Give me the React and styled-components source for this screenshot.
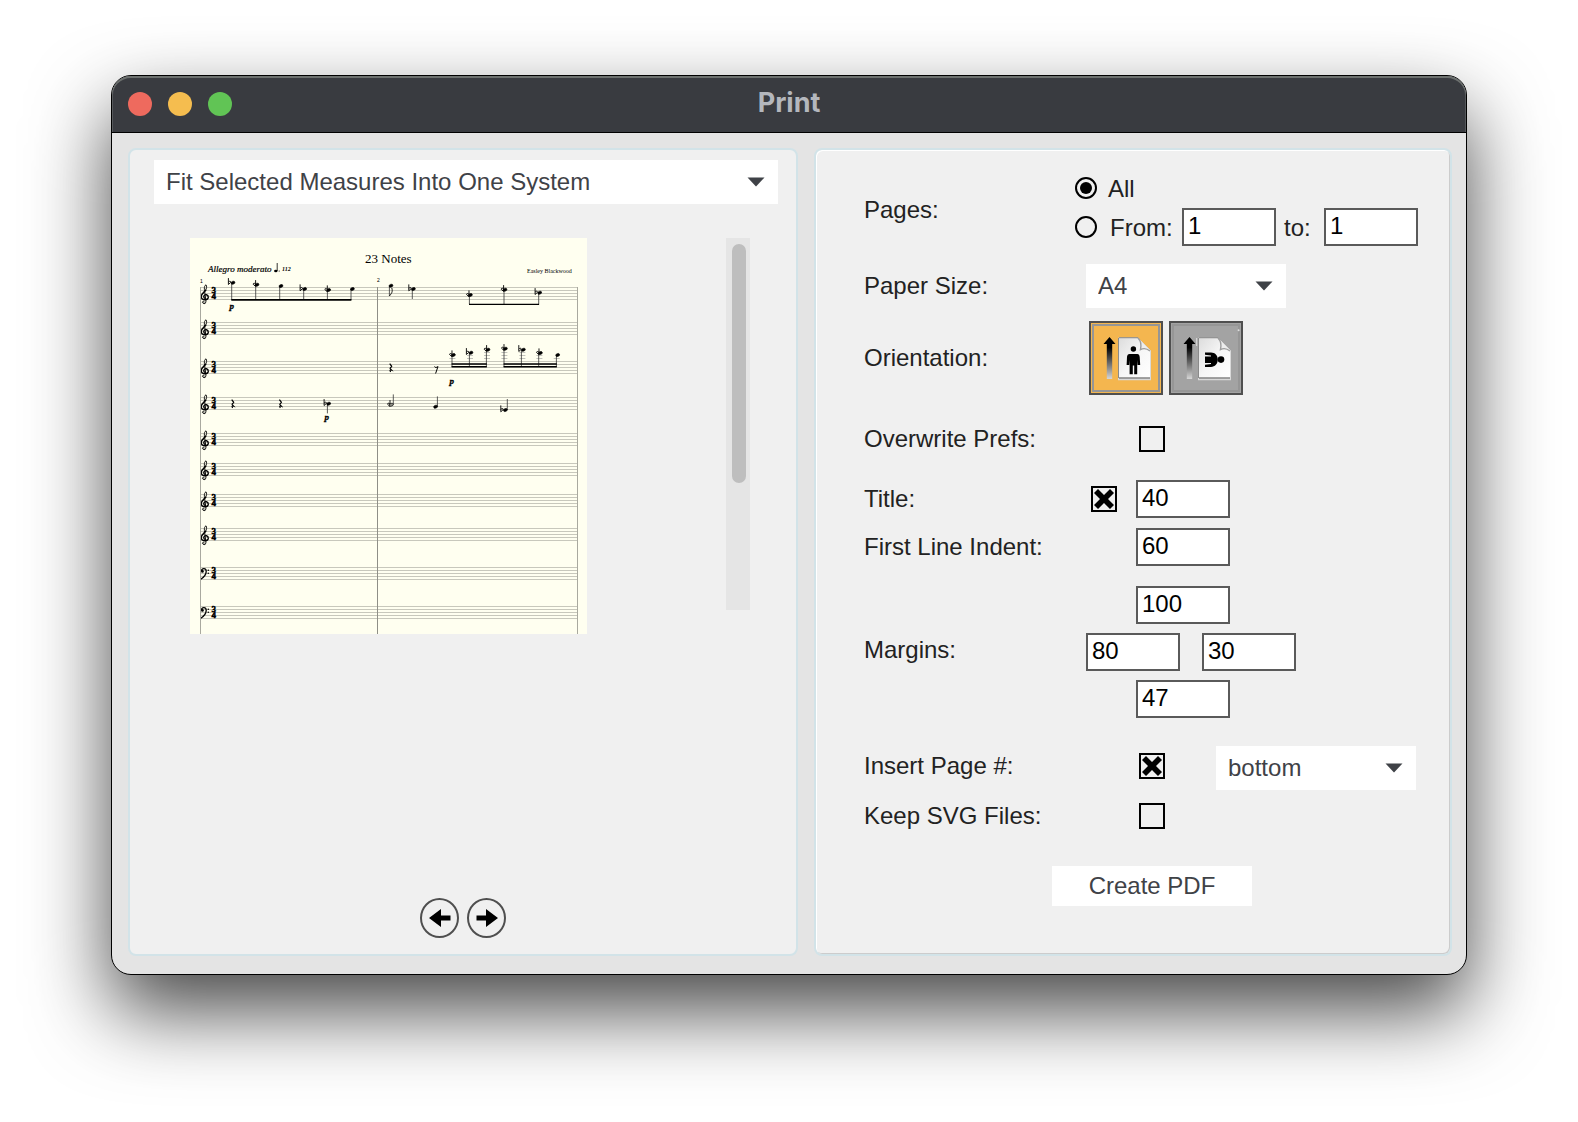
import React, { useState } from "react";
import styled, { createGlobalStyle, css } from "styled-components";

const GlobalStyle = createGlobalStyle`
  *, *::before, *::after { box-sizing: border-box; }
  body {
    margin: 0;
    background: #fff;
    color: #222;
    font: 24px/28px "Liberation Sans", Arial, sans-serif;
  }
  input, select, button { font: inherit; margin: 0; }
`;

/* ---------- window ---------- */

const Desktop = styled.div`
  min-height: 100vh;
  padding: 75px 111px 147px;
  overflow: hidden;
`;

const Window = styled.main`
  border: 1px solid #000;
  border-radius: 20px;
  background: #e4e4e4;
  box-shadow: 0 36px 80px rgba(0, 0, 0, 0.72);
`;

const TitleBar = styled.header`
  display: grid;
  grid-template-columns: 1fr auto 1fr;
  align-items: center;
  height: 57px;
  padding: 0 16px;
  border-bottom: 1px solid #000;
  border-radius: 19px 19px 0 0;
  background: #393b40;
  box-shadow: inset 0 2px 0 #6d716f, inset 1px 0 0 #56595c, inset -1px 0 0 #56595c;
`;

const Lights = styled.div`
  display: flex;
  gap: 16px;
`;

const Light = styled.button`
  width: 24px;
  height: 24px;
  padding: 0;
  border: 0;
  border-radius: 50%;
  background: ${(p) => p.$color};
`;

const Title = styled.h1`
  margin: 0;
  padding-bottom: 2px;
  color: #b4b7bd;
  font: 700 27px/32px Inter, sans-serif;
`;

const Panels = styled.div`
  display: grid;
  grid-template-columns: 670fr 638fr;
  gap: 16px;
  padding: 15px 14px 18px 16px;
`;

const Panel = styled.section`
  display: flex;
  flex-direction: column;
  min-width: 0;
  border: 2px solid #d2e3e8;
  border-radius: 8px;
  background: #f0f0f0;
`;

const PreviewPanel = styled(Panel)`
  padding: 10px 18px 16px 24px;
`;

const OptionsPanel = styled(Panel)`
  padding: 24px 32px 48px 48px;
  box-shadow: inset 1px 1px 0 #fff, inset -1px -1px 0 #ccc;
`;

/* ---------- controls ---------- */

const SelectBox = styled.div`
  display: grid;
  align-items: center;
  width: ${(p) => p.$width};
  background: #fff;

  > * { grid-area: 1 / 1; }
  > svg { justify-self: end; margin-right: 13px; pointer-events: none; }
`;

const NativeSelect = styled.select`
  appearance: none;
  width: 100%;
  height: 44px;
  padding: 0 40px 0 12px;
  border: 0;
  border-radius: 0;
  background: transparent;
  color: #3f4247;
`;

const NumberBox = styled.input`
  width: 94px;
  height: 38px;
  padding: 0 4px 2px;
  border: 2px solid #5a5a5a;
  border-radius: 0;
  background: #fff;
  color: #000;
`;

const tick = css`
  appearance: none;
  display: grid;
  place-items: center;
  flex: none;
  border: 2px solid #000;
  background: transparent;
`;

const CheckBox = styled.input.attrs({ type: "checkbox" })`
  ${tick}
  width: 26px;
  height: 26px;

  &:checked::before {
    content: "";
    width: 20px;
    height: 20px;
    background: #000;
    clip-path: polygon(20% 0, 50% 30%, 80% 0, 100% 20%, 70% 50%, 100% 80%, 80% 100%, 50% 70%, 20% 100%, 0 80%, 30% 50%, 0 20%);
  }
`;

const Radio = styled.input.attrs({ type: "radio" })`
  ${tick}
  width: 22px;
  height: 22px;
  border-radius: 50%;

  &:checked::before {
    content: "";
    width: 12px;
    height: 12px;
    border-radius: 50%;
    background: #000;
  }
`;

const CreateButton = styled.button`
  align-self: flex-start;
  width: 200px;
  height: 40px;
  margin: 36px 0 0 188px;
  padding: 0;
  border: 0;
  background: #fff;
  color: #3f4247;
`;

/* ---------- preview ---------- */

const PreviewArea = styled.div`
  display: flex;
  justify-content: space-between;
  align-items: flex-start;
  padding: 34px 28px 0 36px;
`;

const Sheet = styled.div`
  width: 397px;
  height: 396px;
  overflow: hidden;
  background: #fffff0;

  svg { display: block; }
`;

const Track = styled.div`
  width: 24px;
  height: 372px;
  padding: 6px 4px 6px 6px;
  background: #e5e5e5;
`;

const Thumb = styled.div`
  height: 239px;
  border-radius: 7px;
  background: #bebebe;
`;

const Pager = styled.nav`
  display: flex;
  justify-content: center;
  gap: 8px;
  margin-top: auto;
  padding-right: 6px;
`;

const RoundButton = styled.button`
  display: grid;
  place-items: center;
  width: 39px;
  height: 40px;
  padding: 0;
  border: 2px solid #4f4f4f;
  border-radius: 50%;
  background: transparent;
`;

/* ---------- options form ---------- */

const Row = styled.div`
  display: grid;
  grid-template-columns: 211px 1fr;
  align-items: center;
  margin-top: ${(p) => p.$gap || 0}px;

  /* tall rows sit their captions a little above the middle */
  ${(p) =>
    p.$tall &&
    css`
      > label, > span, ${CheckBox} { margin-bottom: 4px; }
    `}
`;

const Controls = styled.div`
  display: flex;
  align-items: center;
  gap: ${(p) => p.$gap || 0}px;
  padding-left: ${(p) => p.$indent || 0}px;
`;

const Stack = styled.div`
  display: flex;
  flex-direction: column;
  gap: 6px;
`;

const RangeLine = styled.div`
  display: flex;
  align-items: center;
`;

const RadioLabel = styled.label`
  width: ${(p) => p.$width}px;
  padding-top: 2px;
  line-height: 26px;
  padding-left: ${(p) => p.$pad}px;
`;

const MarginGrid = styled.div`
  display: grid;
  justify-content: start;
  row-gap: 9px;
  padding-left: 11px;
`;

const MarginPair = styled.div`
  display: flex;
  gap: 22px;
`;

const MarginEdge = styled.div`
  padding-left: 50px;
`;

const OrientationButton = styled.button`
  display: grid;
  width: 74px;
  height: 74px;
  padding: 1px;
  border: 2px solid #4f4f4f;
  background: ${(p) => (p.$active ? "#f4b64f" : "#a3a3a3")};

  svg { box-shadow: inset 0 0 0 2px #969696; }
`;

const Caret = () => (
  <svg width="18" height="10" viewBox="0 0 18 10" aria-hidden="true">
    <path d="M.5 .5H17.5L9 9.5Z" fill="#3f4247" />
  </svg>
);

function Select({ width, label, id, options }) {
  return (
    <SelectBox $width={width}>
      <NativeSelect id={id} aria-label={label}>
        {options.map((o) => (
          <option key={o}>{o}</option>
        ))}
      </NativeSelect>
      <Caret />
    </SelectBox>
  );
}

function Field({ label, id, gap, indent, controlGap, tall, children }) {
  return (
    <Row $gap={gap} $tall={tall}>
      <label htmlFor={id}>{label}</label>
      <Controls $indent={indent} $gap={controlGap}>
        {children}
      </Controls>
    </Row>
  );
}

/* ---------- orientation icons, drawn on a 68 unit square ---------- */

function PageIcon({ landscape }) {
  const id = landscape ? "land" : "port";
  return (
    <svg width="68" height="68" viewBox="3 3 68 68" aria-hidden="true">
      <defs>
        <linearGradient id={`${id}-arrow`} x1="0" y1="0" x2="0" y2="1">
          <stop offset="0.25" stopColor="#000" />
          <stop offset="1" stopColor="#d6d6d6" />
        </linearGradient>
        <linearGradient id={`${id}-page`} x1="0" y1="0" x2="1" y2="1">
          <stop offset="0" stopColor="#dcdcdc" />
          <stop offset="0.5" stopColor="#f6f6f6" />
          <stop offset="1" stopColor="#fff" />
        </linearGradient>
      </defs>
      <path d="M20.5 16L26.5 23H23.2V58H17.8V23H14.5Z" fill={`url(#${id}-arrow)`} />
      <path d="M29.5 17H49L61.5 29.5V58H29.5Z" fill={`url(#${id}-page)`} stroke="#d9d9d9" />
      <path d="M29.5 17V57M30 16.7H49" fill="none" stroke="#8a8a8a" strokeWidth="1" />
      <path d="M30 57H61" stroke="#666" strokeWidth="1.2" />
      <path d="M29 58.6H62" stroke="#d8d8d8" strokeWidth="1.2" />
      <path d="M49 17C53 20 53.5 24 52.5 27.5C56 26.5 59 28 61.5 30.5Z" fill="#ededed" />
      <path d="M49 17C52 20 52.5 24 51.5 28.5C55 26.8 58.5 28 61 30" fill="none" stroke="#9d9d9d" strokeWidth="1.4" />
      {landscape ? (
        <g>
          <circle cx="52" cy="38.6" r="3.3" />
          <path d="M36 35.4H42V34.4L36 33.8V31.6H42C46 31.6 48.8 34.4 48.8 38.6C48.8 42.8 46 46 42 46H36V43.8L42 43V42H36Z" />
        </g>
      ) : (
        <g>
          <circle cx="44.4" cy="28" r="2.7" />
          <path d="M40.5 33H48.3Q50.4 33 50.7 36L51.2 44H48.6L48.2 39V53.3H45.2V44.5H43.8V53.3H40.6V39L40.2 44H37.6L38 36Q38.3 33 40.5 33Z" />
        </g>
      )}
      {landscape && (
        <g>
          <path d="M27.7 17V25" stroke="#ddd" />
          <circle cx="69.6" cy="9.2" r="1" fill="#ddd" />
        </g>
      )}
    </svg>
  );
}

/* ---------- score ---------- */

const STAVES = [49, 84, 123, 159, 195, 225, 256, 290, 329, 368];

const Treble = ({ y }) => (
  <g transform={`translate(10 ${y - 3})`} fill="none" stroke="#000" strokeLinecap="round">
    <path d="M5 19.4C2.4 20.4 1.6 17.6 3.4 17.2C4.2 17.3 4.3 18 4 18.4M5 19.4C6.2 18.8 6 17.2 5.8 16L4.4 5.4C4.1 3 4.8 1.4 6 .8C7 2.4 6.8 4.6 5.4 6.4" strokeWidth=".9" />
    <path d="M5.8 6.2C3.6 8.6 1.2 10 1.2 12.6C1.2 16.6 7.8 16.8 8.3 13.4C8.5 10.4 4.8 9.8 3.9 12C3.5 13.2 4.2 14.1 5 14.3" strokeWidth="1.4" />
  </g>
);

const Bass = ({ y }) => (
  <g transform={`translate(10 ${y + 1})`}>
    <circle cx="2.4" cy="3.4" r="1.4" />
    <path d="M1.4 3C1.4 -.2 6.4 -.2 6.2 3.6C6 7.4 3.6 9.4 .8 11.2" fill="none" stroke="#000" strokeWidth="1.3" />
    <circle cx="8.3" cy="2.2" r=".8" />
    <circle cx="8.3" cy="5.2" r=".8" />
  </g>
);

const Head = ({ x, y, open }) => (
  <ellipse cx={x} cy={y} rx="2" ry="1.4" transform={`rotate(-20 ${x} ${y})`} fill={open ? "#99998f" : "#000"} stroke="#000" strokeWidth=".6" />
);

/* "b" is a flat, "d" a reversed quarter-tone flat */
const Accidental = ({ x, y, kind }) => (
  <path
    transform={`translate(${x} ${y}) scale(${kind === "d" ? -1 : 1} 1)`}
    d="M-1.2 -4.6V1.8L1.2 -.4C1.2 -2 -.4 -1.6 -1.2 -.6"
    fill="none"
    stroke="#000"
    strokeWidth=".9"
  />
);

const Note = ({ x, y, stemX, stemY, acc, open }) => (
  <g>
    {acc && <Accidental x={x - (acc === "d" ? 2.6 : 3.4)} y={y} kind={acc} />}
    <path d={`M${stemX} ${y}V${stemY}`} stroke="#333" strokeWidth=".8" />
    <Head x={x} y={y} open={open} />
  </g>
);

const QuarterRest = ({ x, y }) => (
  <path transform={`translate(${x} ${y})`} d="M-1 -4L1 -1.4L-.6 .6L1 2.4C-.8 1.8 -1.2 3 0 4.2" fill="none" stroke="#000" strokeWidth="1.2" />
);

const OPENING = [
  [43, 44.7, 41.7, "b"], [67, 46.7, 65.7, "d"], [91, 48, 89.7], [114.7, 51, 113.7, "b"], [138.7, 52, 137.4, "d"], [162.4, 51, 161],
];
const ANSWER = [[280.4, 57, 279.4, "d"], [315, 51.7, 314, "d"], [349.7, 54.7, 348.7, "b"]];
const RUN = [
  [263.4, 117, 262, "d"], [281, 114.7, 279.4, "b"], [298, 111.7, 296.4, "d"],
  [315.4, 110.7, 314, "d"], [333.4, 111.7, 331.4, "b"], [350.4, 115, 348.7, "d"], [367.7, 117, 366.4],
];

const Dynamic = styled.text`
  font: italic 700 9px "Liberation Serif", serif;
  stroke: #000;
  stroke-width: 0.3px;
`;
const Meter = styled.text`
  font: 700 9px "Liberation Serif", serif;
  stroke: #000;
  stroke-width: 0.5px;
`;
const ScoreText = styled.text`
  font: ${(p) => p.$font} "Liberation Serif", serif;
`;
const BarNumber = styled.text`
  font: 5px "Liberation Sans", sans-serif;
`;

function Score() {
  const notes = (list, end) =>
    list.map(([x, y, s, acc]) => <Note key={x} x={x} y={y} stemX={s} stemY={end} acc={acc} />);
  return (
    <svg width="397" height="396" viewBox="0 0 397 396" role="img" aria-label="Score preview">
      {STAVES.map((y, i) => (
        <g key={y}>
          <path
            d={[0, 3, 6, 9, 12].map((d) => `M10 ${y + d + 0.5}H388`).join("")}
            stroke="#c8c8bc"
          />
          {i < 8 ? <Treble y={y} /> : <Bass y={y} />}
          <Meter>
            <tspan x="21.5" y={y + 6}>3</tspan>
            <tspan x="21.5" y={y + 12}>4</tspan>
          </Meter>
        </g>
      ))}
      <path d="M10.5 49V396M387.5 49V396" stroke="#a9a99f" />
      <path d="M187.5 49V396" stroke="#8f8f87" />

      <ScoreText x="175" y="25" $font="13px">23 Notes</ScoreText>
      <ScoreText x="18" y="34" $font="italic 9px" stroke="#000" strokeWidth=".2">Allegro moderato</ScoreText>
      <path d="M87.2 33V25" stroke="#000" strokeWidth=".8" />
      <ellipse cx="85.8" cy="33" rx="1.7" ry="1.2" />
      <circle cx="89.2" cy="33" r=".6" />
      <ScoreText x="92" y="33" $font="italic 700 6px">112</ScoreText>
      <ScoreText x="337" y="35" $font="6px">Easley Blackwood</ScoreText>
      <BarNumber x="10" y="45">1</BarNumber>
      <BarNumber x="187" y="44">2</BarNumber>

      {notes(OPENING, 62)}
      <path d="M41.3 61.9H161.4" stroke="#000" strokeWidth="1.6" />
      <Dynamic x="39.5" y="71">p</Dynamic>

      <Note x={201} y={47.7} stemX={199.4} stemY={58} />
      <path d="M199.4 58C201.4 55.5 203 54 201.8 50" fill="none" stroke="#000" strokeWidth=".9" />
      <Note x={223.4} y={51} stemX={222.3} stemY={61} acc="b" />
      {notes(ANSWER, 66)}
      <path d="M279 66.4H349.1" stroke="#000" strokeWidth="1.4" />

      <QuarterRest x={200.7} y={129.7} />
      <path d="M244.5 128.5C245 130 247 129.5 248 128.5L245.6 135.5" fill="none" stroke="#000" />
      {RUN.map(([x, y]) => (
        <path
          key={x}
          d={[114.5, 117.5, 120.5].filter((l) => l > y + 1).map((l) => `M${x - 4} ${l}H${x + 2}`).join("")}
          stroke="#999"
          strokeWidth=".6"
        />
      ))}
      {notes(RUN, 129)}
      <path d="M261.6 126H296.8M261.6 128.8H296.8M313.6 126H366.8M313.6 128.8H366.8" stroke="#000" strokeWidth="1.4" />
      <Dynamic x="259.5" y="146">p</Dynamic>

      <QuarterRest x={42.7} y={165.7} />
      <QuarterRest x={90.4} y={165.7} />
      <Note x={138.7} y={165.7} stemX={137.4} stemY={175.4} acc="b" />
      <Dynamic x="134.5" y="182">p</Dynamic>
      <Note x={201.4} y={166.7} stemX={203.3} stemY={156.4} acc="d" open />
      <Note x={245.6} y={168.7} stemX={247.4} stemY={158.4} />
      <Note x={315.4} y={172} stemX={317.3} stemY={161} acc="b" />
    </svg>
  );
}

/* ---------- app ---------- */

export default function App() {
  const [orientation, setOrientation] = useState("portrait");
  return (
    <>
      <GlobalStyle />
      <Desktop>
        <Window>
          <TitleBar>
            <Lights>
              <Light $color="#ee6a5e" aria-label="Close" />
              <Light $color="#f5bd4f" aria-label="Minimize" />
              <Light $color="#61c455" aria-label="Zoom" />
            </Lights>
            <Title>Print</Title>
          </TitleBar>
          <Panels>
            <PreviewPanel>
              <Select width="100%" label="Layout" options={["Fit Selected Measures Into One System"]} />
              <PreviewArea>
                <Sheet><Score /></Sheet>
                <Track><Thumb /></Track>
              </PreviewArea>
              <Pager>
                <RoundButton aria-label="Previous page">
                  <svg width="22" height="20" viewBox="0 0 22 20"><path d="M0 10L12 1V7.5H21.5V12.5H12V19Z" /></svg>
                </RoundButton>
                <RoundButton aria-label="Next page">
                  <svg width="22" height="20" viewBox="0 0 22 20"><path d="M22 10L10 1V7.5H.5V12.5H10V19Z" /></svg>
                </RoundButton>
              </Pager>
            </PreviewPanel>

            <OptionsPanel>
              <Row>
                <span>Pages:</span>
                <Stack>
                  <RangeLine>
                    <Radio id="all" name="pages" defaultChecked />
                    <RadioLabel htmlFor="all" $pad={11}>All</RadioLabel>
                  </RangeLine>
                  <RangeLine>
                    <Radio id="range" name="pages" />
                    <RadioLabel htmlFor="range" $pad={13} $width={85}>From:</RadioLabel>
                    <NumberBox aria-label="From page" defaultValue="1" />
                    <RadioLabel htmlFor="to" $pad={8} $width={48}>to:</RadioLabel>
                    <NumberBox id="to" defaultValue="1" />
                  </RangeLine>
                </Stack>
              </Row>
              <Field label="Paper Size:" id="paper" gap={18} indent={11}>
                <Select width="200px" id="paper" options={["A4", "Letter"]} />
              </Field>
              <Row $gap={13}>
                <span>Orientation:</span>
                <Controls $indent={14} $gap={6}>
                  <OrientationButton
                    aria-label="Portrait"
                    $active={orientation === "portrait"}
                    onClick={() => setOrientation("portrait")}
                  >
                    <PageIcon />
                  </OrientationButton>
                  <OrientationButton
                    aria-label="Landscape"
                    $active={orientation === "landscape"}
                    onClick={() => setOrientation("landscape")}
                  >
                    <PageIcon landscape />
                  </OrientationButton>
                </Controls>
              </Row>
              <Field label="Overwrite Prefs:" id="overwrite" gap={30} indent={64}>
                <CheckBox id="overwrite" />
              </Field>
              <Field label="Title:" id="title" gap={27} indent={16} controlGap={19}>
                <CheckBox id="title" defaultChecked />
                <NumberBox aria-label="Title size" defaultValue="40" />
              </Field>
              <Field label="First Line Indent:" id="indent" gap={10} indent={61}>
                <NumberBox id="indent" defaultValue="60" />
              </Field>
              <Row $gap={20} $tall>
                <span>Margins:</span>
                <MarginGrid>
                  <MarginEdge><NumberBox aria-label="Top margin" defaultValue="100" /></MarginEdge>
                  <MarginPair>
                    <NumberBox aria-label="Left margin" defaultValue="80" />
                    <NumberBox aria-label="Right margin" defaultValue="30" />
                  </MarginPair>
                  <MarginEdge><NumberBox aria-label="Bottom margin" defaultValue="47" /></MarginEdge>
                </MarginGrid>
              </Row>
              <Field label="Insert Page #:" id="number" gap={28} indent={64} controlGap={51} tall>
                <CheckBox id="number" defaultChecked />
                <Select width="200px" label="Page number position" options={["bottom", "top"]} />
              </Field>
              <Field label="Keep SVG Files:" id="svg" gap={12} indent={64}>
                <CheckBox id="svg" />
              </Field>
              <CreateButton>Create PDF</CreateButton>
            </OptionsPanel>
          </Panels>
        </Window>
      </Desktop>
    </>
  );
}
